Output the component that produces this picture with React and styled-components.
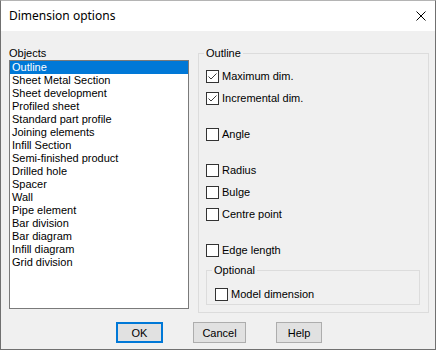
import React from "react";
import styled, { createGlobalStyle } from "styled-components";

const GlobalStyle = createGlobalStyle`
  html, body { margin: 0; padding: 0; background: #ffffff; }
  body { font-family: "Liberation Sans", Arial, sans-serif; }
  * { box-sizing: border-box; }
`;

const Window = styled.div`
  width: 436px;
  height: 350px;
  display: flex;
  flex-direction: column;
  background: #f0f0f0;
  border: 1px solid #707070;
  border-top-color: #b4b4b4;
  color: #000;
`;

const TitleBar = styled.div`
  height: 30px;
  flex: none;
  background: #ffffff;
  display: flex;
  align-items: center;
  justify-content: space-between;
  padding: 0 9px 0 8px;
`;

const Title = styled.div`
  font-family: "Noto Sans", "Open Sans", sans-serif;
  font-size: 12px;
  line-height: 16px;
  color: #000;
  margin-top: -1px;
`;

const CloseButton = styled.div`
  width: 10px;
  height: 10px;
  display: flex;
  margin-top: -1px;
`;

const Body = styled.div`
  flex: 1;
  display: flex;
  flex-direction: column;
  padding: 16px 6px 0 8px;
`;

const Main = styled.div`
  display: flex;
  align-items: flex-start;
  gap: 9px;
`;

const ObjectsColumn = styled.div`
  width: 180px;
  display: flex;
  flex-direction: column;
`;

const FieldLabel = styled.div`
  font-size: 11px;
  line-height: 13px;
  height: 13px;
`;

const ListBox = styled.div`
  height: 249px;
  background: #ffffff;
  border: 1px solid #7a7a7a;
  display: flex;
  flex-direction: column;
`;

const ListItem = styled.div`
  height: 13px;
  font-size: 11px;
  line-height: 13px;
  padding-left: 2px;
  white-space: nowrap;
  background: ${(p) => (p.$selected ? "#0078d7" : "transparent")};
  color: ${(p) => (p.$selected ? "#ffffff" : "#000000")};
`;

const GroupBox = styled.fieldset`
  margin: 0;
  padding: 0;
  min-width: 0;
  border: 1px solid #dcdcdc;
  width: ${(p) => (p.$width ? `${p.$width}px` : "auto")};
  height: ${(p) => (p.$height ? `${p.$height}px` : "auto")};
  margin-top: ${(p) => p.$mt || 0}px;
`;

const Legend = styled.legend`
  font-size: 11px;
  line-height: 13px;
  height: 13px;
  padding: 0 2px;
  margin-left: 5px;
`;

const GroupContent = styled.div`
  display: flex;
  flex-direction: column;
  padding: ${(p) => p.$pad};
`;

const CheckRow = styled.label`
  display: flex;
  align-items: center;
  gap: 3px;
  height: 13px;
  margin-top: ${(p) => p.$mt || 0}px;
  font-size: 11px;
  line-height: 13px;
  white-space: nowrap;
`;

const Box = styled.span`
  width: 13px;
  height: 13px;
  flex: none;
  border: 1px solid #333333;
  background: #ffffff;
  display: flex;
`;

const ButtonRow = styled.div`
  display: flex;
  justify-content: center;
  gap: 30px;
  margin-top: 9px;
`;

const Button = styled.div`
  width: ${(p) => p.$width}px;
  height: 21px;
  display: flex;
  align-items: center;
  justify-content: center;
  background: #e1e1e1;
  border: ${(p) => (p.$default ? "2px solid #0078d7" : "1px solid #adadad")};
  font-size: 11px;
  color: #000;
`;

function CheckBox({ checked, label, mt }) {
  return (
    <CheckRow $mt={mt}>
      <Box>
        {checked && (
          <svg width="11" height="11" viewBox="0 0 11 11">
            <polyline
              points="1.5,5.5 4,8 9.5,2.5"
              fill="none"
              stroke="#3c3c3c"
              strokeWidth="1"
            />
          </svg>
        )}
      </Box>
      <span>{label}</span>
    </CheckRow>
  );
}

const items = [
  "Outline",
  "Sheet Metal Section",
  "Sheet development",
  "Profiled sheet",
  "Standard part profile",
  "Joining elements",
  "Infill Section",
  "Semi-finished product",
  "Drilled hole",
  "Spacer",
  "Wall",
  "Pipe element",
  "Bar division",
  "Bar diagram",
  "Infill diagram",
  "Grid division",
];

export default function App() {
  return (
    <>
      <GlobalStyle />
      <Window>
        <TitleBar>
          <Title>Dimension options</Title>
          <CloseButton>
            <svg width="10" height="10" viewBox="0 0 10 10">
              <path d="M0.5 0.5 L9.5 9.5 M9.5 0.5 L0.5 9.5" stroke="#000" strokeWidth="1" />
            </svg>
          </CloseButton>
        </TitleBar>
        <Body>
          <Main>
            <ObjectsColumn>
              <FieldLabel>Objects</FieldLabel>
              <ListBox>
                {items.map((it, i) => (
                  <ListItem key={it} $selected={i === 0}>
                    {it}
                  </ListItem>
                ))}
              </ListBox>
            </ObjectsColumn>
            <GroupBox $width={231} $height={266}>
              <Legend>Outline</Legend>
              <GroupContent $pad="10px 8px 0 7px">
                <CheckBox checked label="Maximum dim." />
                <CheckBox checked label="Incremental dim." mt={9} />
                <CheckBox label="Angle" mt={23} />
                <CheckBox label="Radius" mt={23} />
                <CheckBox label="Bulge" mt={9} />
                <CheckBox label="Centre point" mt={9} />
                <CheckBox label="Edge length" mt={23} />
                <GroupBox $mt={7}>
                  <Legend>Optional</Legend>
                  <GroupContent $pad="11px 8px 3px 8px">
                    <CheckBox label="Model dimension" />
                  </GroupContent>
                </GroupBox>
              </GroupContent>
            </GroupBox>
          </Main>
          <ButtonRow>
            <Button $default $width={47}>OK</Button>
            <Button $width={53}>Cancel</Button>
            <Button $width={46}>Help</Button>
          </ButtonRow>
        </Body>
      </Window>
    </>
  );
}
